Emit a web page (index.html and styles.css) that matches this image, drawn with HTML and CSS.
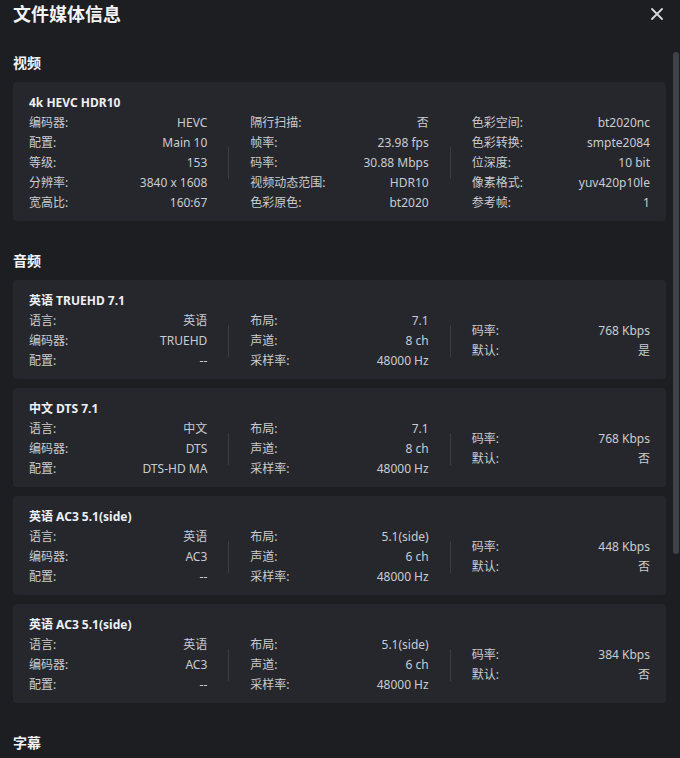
FILE: index.html
```html
<!DOCTYPE html>
<html lang="zh-CN">
<head>
<meta charset="utf-8">
<title>文件媒体信息</title>
<link rel="stylesheet" href="styles.css">
</head>
<body>
<div class="dialog">
  <header class="head">
    <h1 class="title">文件媒体信息</h1>
    <button class="close" aria-label="关闭">
      <svg width="12" height="12" viewBox="0 0 12 12"><path d="M1 1 L11 11 M11 1 L1 11" stroke="currentColor" stroke-width="1.8" stroke-linecap="round" fill="none"/></svg>
    </button>
  </header>

  <div class="content">
    <section class="section">
      <h2 class="section-title">视频</h2>
      <div class="card">
        <div class="card-title">4k HEVC HDR10</div>
        <div class="cols">
          <dl class="col">
            <dt>编码器:</dt><dd>HEVC</dd>
            <dt>配置:</dt><dd>Main 10</dd>
            <dt>等级:</dt><dd>153</dd>
            <dt>分辨率:</dt><dd>3840 x 1608</dd>
            <dt>宽高比:</dt><dd>160:67</dd>
          </dl>
          <div class="divider"></div>
          <dl class="col">
            <dt>隔行扫描:</dt><dd>否</dd>
            <dt>帧率:</dt><dd>23.98 fps</dd>
            <dt>码率:</dt><dd>30.88 Mbps</dd>
            <dt>视频动态范围:</dt><dd>HDR10</dd>
            <dt>色彩原色:</dt><dd>bt2020</dd>
          </dl>
          <div class="divider"></div>
          <dl class="col">
            <dt>色彩空间:</dt><dd>bt2020nc</dd>
            <dt>色彩转换:</dt><dd>smpte2084</dd>
            <dt>位深度:</dt><dd>10 bit</dd>
            <dt>像素格式:</dt><dd>yuv420p10le</dd>
            <dt>参考帧:</dt><dd>1</dd>
          </dl>
        </div>
      </div>
    </section>

    <section class="section">
      <h2 class="section-title">音频</h2>
      <div class="card-list">
        <div class="card">
          <div class="card-title">英语 TRUEHD 7.1</div>
          <div class="cols">
            <dl class="col">
              <dt>语言:</dt><dd>英语</dd>
              <dt>编码器:</dt><dd>TRUEHD</dd>
              <dt>配置:</dt><dd>--</dd>
            </dl>
            <div class="divider"></div>
            <dl class="col">
              <dt>布局:</dt><dd>7.1</dd>
              <dt>声道:</dt><dd>8 ch</dd>
              <dt>采样率:</dt><dd>48000 Hz</dd>
            </dl>
            <div class="divider"></div>
            <dl class="col">
              <dt>码率:</dt><dd>768 Kbps</dd>
              <dt>默认:</dt><dd>是</dd>
            </dl>
          </div>
        </div>

        <div class="card">
          <div class="card-title">中文 DTS 7.1</div>
          <div class="cols">
            <dl class="col">
              <dt>语言:</dt><dd>中文</dd>
              <dt>编码器:</dt><dd>DTS</dd>
              <dt>配置:</dt><dd>DTS-HD MA</dd>
            </dl>
            <div class="divider"></div>
            <dl class="col">
              <dt>布局:</dt><dd>7.1</dd>
              <dt>声道:</dt><dd>8 ch</dd>
              <dt>采样率:</dt><dd>48000 Hz</dd>
            </dl>
            <div class="divider"></div>
            <dl class="col">
              <dt>码率:</dt><dd>768 Kbps</dd>
              <dt>默认:</dt><dd>否</dd>
            </dl>
          </div>
        </div>

        <div class="card">
          <div class="card-title">英语 AC3 5.1(side)</div>
          <div class="cols">
            <dl class="col">
              <dt>语言:</dt><dd>英语</dd>
              <dt>编码器:</dt><dd>AC3</dd>
              <dt>配置:</dt><dd>--</dd>
            </dl>
            <div class="divider"></div>
            <dl class="col">
              <dt>布局:</dt><dd>5.1(side)</dd>
              <dt>声道:</dt><dd>6 ch</dd>
              <dt>采样率:</dt><dd>48000 Hz</dd>
            </dl>
            <div class="divider"></div>
            <dl class="col">
              <dt>码率:</dt><dd>448 Kbps</dd>
              <dt>默认:</dt><dd>否</dd>
            </dl>
          </div>
        </div>

        <div class="card">
          <div class="card-title">英语 AC3 5.1(side)</div>
          <div class="cols">
            <dl class="col">
              <dt>语言:</dt><dd>英语</dd>
              <dt>编码器:</dt><dd>AC3</dd>
              <dt>配置:</dt><dd>--</dd>
            </dl>
            <div class="divider"></div>
            <dl class="col">
              <dt>布局:</dt><dd>5.1(side)</dd>
              <dt>声道:</dt><dd>6 ch</dd>
              <dt>采样率:</dt><dd>48000 Hz</dd>
            </dl>
            <div class="divider"></div>
            <dl class="col">
              <dt>码率:</dt><dd>384 Kbps</dd>
              <dt>默认:</dt><dd>否</dd>
            </dl>
          </div>
        </div>
      </div>
    </section>

    <section class="section">
      <h2 class="section-title">字幕</h2>
    </section>
  </div>
  <div class="scroll-thumb"></div>
</div>
</body>
</html>
```

FILE: styles.css
```css
* { box-sizing: border-box; }

html, body {
  margin: 0;
  padding: 0;
  background: #1c1e22;
  height: 758px;
  overflow: hidden;
}

body {
  font-family: "Noto Sans", "Noto Sans CJK SC", sans-serif;
  color: #c9ccd1;
  font-size: 12px;
}

.dialog {
  position: relative;
  width: 680px;
  height: 758px;
  overflow: hidden;
}

.head {
  display: flex;
  align-items: center;
  justify-content: space-between;
  height: 27px;
  padding: 0 17px 0 13px;
}

.title {
  margin: 0;
  font-size: 18px;
  line-height: 27px;
  font-weight: 700;
  color: #f2f3f5;
  font-family: "Noto Sans CJK SC", sans-serif;
}

.close {
  display: flex;
  align-items: center;
  justify-content: center;
  width: 12px;
  height: 12px;
  margin-top: 1px;
  padding: 0;
  border: 0;
  background: none;
  color: #d6d8dc;
}

.content {
  padding: 25px 14px 0 13px;
}

.section + .section {
  margin-top: 29px;
}

.section-title {
  margin: 0 0 10px;
  font-size: 14px;
  line-height: 20px;
  font-weight: 700;
  color: #f2f3f5;
  font-family: "Noto Sans CJK SC", sans-serif;
}

.card-list {
  display: flex;
  flex-direction: column;
  gap: 9px;
}

.card {
  background: #25272c;
  border-radius: 4px;
  padding: 11px 16px 8px;
}

.card-title {
  font-size: 12px;
  line-height: 20px;
  font-weight: 700;
  color: #eef0f2;
}

.cols {
  display: grid;
  grid-template-columns: 1fr 1px 1fr 1px 1fr;
  column-gap: 21px;
  align-items: center;
}

.col {
  margin: 0;
  display: grid;
  grid-template-columns: auto 1fr;
  line-height: 20px;
}

.col dt {
  margin: 0;
  white-space: nowrap;
}

.col dd {
  margin: 0;
  text-align: right;
  white-space: nowrap;
}

.divider {
  width: 1px;
  height: 32px;
  background: #3a3d43;
}

.scroll-thumb {
  position: absolute;
  left: 673px;
  top: 52px;
  width: 6px;
  height: 502px;
  border-radius: 3px;
  background: #3e4249;
}
```
